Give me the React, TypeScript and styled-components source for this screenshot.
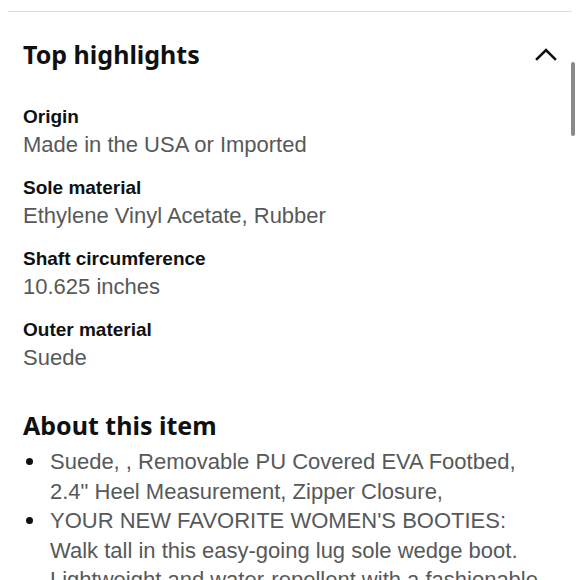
import styled, { createGlobalStyle } from "styled-components";

const GlobalStyle = createGlobalStyle`
  html, body {
    margin: 0;
    padding: 0;
    background: #ffffff;
    overflow: hidden;
  }
  body {
    font-family: "Liberation Sans", Arial, sans-serif;
  }
`;

const Page = styled.div`
  position: relative;
  width: 580px;
  height: 580px;
  overflow: hidden;
  background: #fff;
`;

const Divider = styled.div`
  margin: 11px 8px 0;
  height: 1px;
  background: #dcdcdc;
`;

const Section = styled.section`
  padding: 0 24px 0 23px;
`;

const SectionHeader = styled.div`
  display: flex;
  justify-content: space-between;
  align-items: center;
  padding-top: 24px;
`;

const Heading = styled.h2`
  margin: 0;
  font-family: "Noto Sans", "Open Sans", sans-serif;
  font-weight: 700;
  font-size: 25px;
  line-height: 36px;
  color: #0f1111;
`;

const Chevron = styled.svg`
  width: 22px;
  height: 14px;
  margin-right: -1px;
`;

const Specs = styled.dl`
  margin: 33px 0 0;
`;

const SpecItem = styled.div`
  margin-bottom: 19px;
`;

const SpecLabel = styled.dt`
  font-weight: 700;
  font-size: 19px;
  line-height: 23px;
  color: #0f1111;
`;

const SpecValue = styled.dd`
  margin: 5px 0 0;
  font-size: 22px;
  line-height: 24px;
  color: #565959;
`;

const AboutHeading = styled(Heading)`
  margin-top: 37px;
`;

const BulletList = styled.ul`
  margin: 4px 0 0;
  padding: 0 0 0 27px;
  list-style: none;
`;

const Bullet = styled.li`
  position: relative;
  font-size: 22px;
  line-height: 29.5px;
  color: #565959;
  &::before {
    content: "";
    position: absolute;
    left: -24px;
    top: 11px;
    width: 7px;
    height: 7px;
    border-radius: 50%;
    background: #0f1111;
  }
`;

const ScrollThumb = styled.div`
  position: absolute;
  right: 5px;
  top: 62px;
  width: 4px;
  height: 74px;
  border-radius: 2px;
  background: #8a8a8a;
`;

const specs = [
  { label: "Origin", value: "Made in the USA or Imported" },
  { label: "Sole material", value: "Ethylene Vinyl Acetate, Rubber" },
  { label: "Shaft circumference", value: "10.625 inches" },
  { label: "Outer material", value: "Suede" },
];

const bullets = [
  'Suede, , Removable PU Covered EVA Footbed, 2.4" Heel Measurement, Zipper Closure,',
  "YOUR NEW FAVORITE WOMEN'S BOOTIES: Walk tall in this easy-going lug sole wedge boot. Lightweight and water-repellent with a fashionable look.",
];

export default function App() {
  return (
    <Page>
      <GlobalStyle />
      <Divider />
      <Section>
        <SectionHeader>
          <Heading>Top highlights</Heading>
          <Chevron viewBox="0 0 22 14" fill="none">
            <path
              d="M2 12 L11 3 L20 12"
              stroke="#0f1111"
              strokeWidth="2.6"
              strokeLinecap="square"
            />
          </Chevron>
        </SectionHeader>
        <Specs>
          {specs.map((s) => (
            <SpecItem key={s.label}>
              <SpecLabel>{s.label}</SpecLabel>
              <SpecValue>{s.value}</SpecValue>
            </SpecItem>
          ))}
        </Specs>
        <AboutHeading>About this item</AboutHeading>
        <BulletList>
          {bullets.map((b, i) => (
            <Bullet key={i}>{b}</Bullet>
          ))}
        </BulletList>
      </Section>
      <ScrollThumb />
    </Page>
  );
}
